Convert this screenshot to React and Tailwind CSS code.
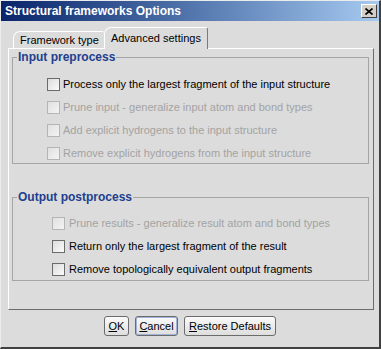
// App.jsx
import { useState } from 'react';

const inputOptions = [
  { label: 'Process only the largest fragment of the input structure', enabled: true },
  { label: 'Prune input - generalize input atom and bond types', enabled: false },
  { label: 'Add explicit hydrogens to the input structure', enabled: false },
  { label: 'Remove explicit hydrogens from the input structure', enabled: false },
];

const outputOptions = [
  { label: 'Prune results - generalize result atom and bond types', enabled: false },
  { label: 'Return only the largest fragment of the result', enabled: true },
  { label: 'Remove topologically equivalent output fragments', enabled: true },
];

function CheckRow({ label, enabled, gap }) {
  const [checked, setChecked] = useState(false);
  return (
    <label className={`flex h-[17px] items-center ${gap}`}>
      <span
        onClick={() => enabled && setChecked(!checked)}
        className={
          enabled
            ? 'flex h-[13px] w-[13px] items-center justify-center border border-[#6b6b6b] bg-gradient-to-br from-[#dcdcdc] to-[#fbfbfb]'
            : 'flex h-[13px] w-[13px] items-center justify-center border border-[#b5b5b5] bg-gradient-to-br from-[#e0e0e0] to-[#f4f4f4]'
        }
      >
        {checked && (
          <svg width="9" height="9" viewBox="0 0 9 9">
            <path d="M1 4.5 L3.5 7 L8 1.5" stroke="#222" strokeWidth="1.6" fill="none" />
          </svg>
        )}
      </span>
      <span className={enabled ? 'text-black' : 'text-[#a3a3a3]'}>{label}</span>
    </label>
  );
}

function GroupBox({ title, className, children }) {
  return (
    <fieldset className={`ml-[3px] mr-[4px] border border-[#a5a5a5] ${className}`}>
      <legend className="ml-[4px] px-[1px] text-[12px] font-bold leading-[14px] text-[#213f8f]">
        {title}
      </legend>
      {children}
    </fieldset>
  );
}

function Button({ children, className = '' }) {
  return (
    <button
      type="button"
      className={`flex h-[20px] items-center justify-center rounded-[3px] border border-[#6b6b6b] bg-gradient-to-b from-[#fafafa] to-[#dedede] text-[11px] text-black ${className}`}
    >
      {children}
    </button>
  );
}

function App() {
  return (
    <div
      className="flex h-[349px] w-[381px] flex-col border-t border-l border-r-2 border-b-2 border-t-[#ececec] border-l-[#ececec] border-r-[#404040] border-b-[#404040] bg-[#dcdcdc] text-[11px]"
      style={{ fontFamily: '"Liberation Sans", Arial, sans-serif' }}
    >
      {/* title bar */}
      <div className="flex h-[20px] items-center justify-between bg-gradient-to-r from-[#0a246a] to-[#a6caf0] pl-[4px] pr-[2px]">
        <span className="text-[12px] font-bold text-white">Structural frameworks Options</span>
        <span className="flex h-[14px] w-[16px] items-center justify-center border-t border-l border-r border-b border-t-white border-l-white border-r-[#404040] border-b-[#404040] bg-[#d4d0c8]">
          <svg width="8" height="7" viewBox="0 0 8 7">
            <path d="M0.5 0.5 L7.5 6.5 M7.5 0.5 L0.5 6.5" stroke="#000" strokeWidth="1.6" />
          </svg>
        </span>
      </div>

      <div className="flex flex-col pl-[7px] pr-[5px]">
        {/* tabs */}
        <div className="flex h-[27px] items-end pl-[5px]">
          <div className="flex h-[17px] w-[91px] items-center rounded-tl-[7px] rounded-tr-[2px] border-t border-l border-t-white border-l-white pl-[6px] text-black">
            Framework type
          </div>
          <div className="relative z-10 -mb-px h-[22px] w-[104px] rounded-tl-[7px] rounded-tr-[3px] border-t border-l border-r border-t-white border-l-white border-r-[#7a7a7a] bg-[#dcdcdc] pl-[6px] pt-[4px] leading-[13px] text-black">
            Advanced settings
          </div>
        </div>

        {/* panel */}
        <div className="h-[262px] border-t border-l border-r border-b border-t-white border-l-white border-r-[#6b6b6b] border-b-[#6b6b6b]">
          <GroupBox title="Input preprocess" className="mt-[1px] pt-[12px] pb-[1px]">
            <div className="flex flex-col gap-[6px] pl-[34px]">
              {inputOptions.map((o) => (
                <CheckRow key={o.label} label={o.label} enabled={o.enabled} gap="gap-[3px]" />
              ))}
            </div>
          </GroupBox>

          <GroupBox title="Output postprocess" className="mt-[26px] pt-[11px] pb-[2px]">
            <div className="flex flex-col gap-[6px] pl-[39px]">
              {outputOptions.map((o) => (
                <CheckRow key={o.label} label={o.label} enabled={o.enabled} gap="gap-[4px]" />
              ))}
            </div>
          </GroupBox>
        </div>
      </div>

      {/* buttons */}
      <div className="mt-[6px] flex justify-center gap-[6px]">
        <Button className="w-[25px]">
          <span className="underline">O</span>K
        </Button>
        <Button className="w-[43px] shadow-[inset_0_0_0_1px_#9fb3d9]">
          <span className="underline">C</span>ancel
        </Button>
        <Button className="w-[92px]">
          <span className="underline">R</span>estore Defaults
        </Button>
      </div>
    </div>
  );
}

export default App;
